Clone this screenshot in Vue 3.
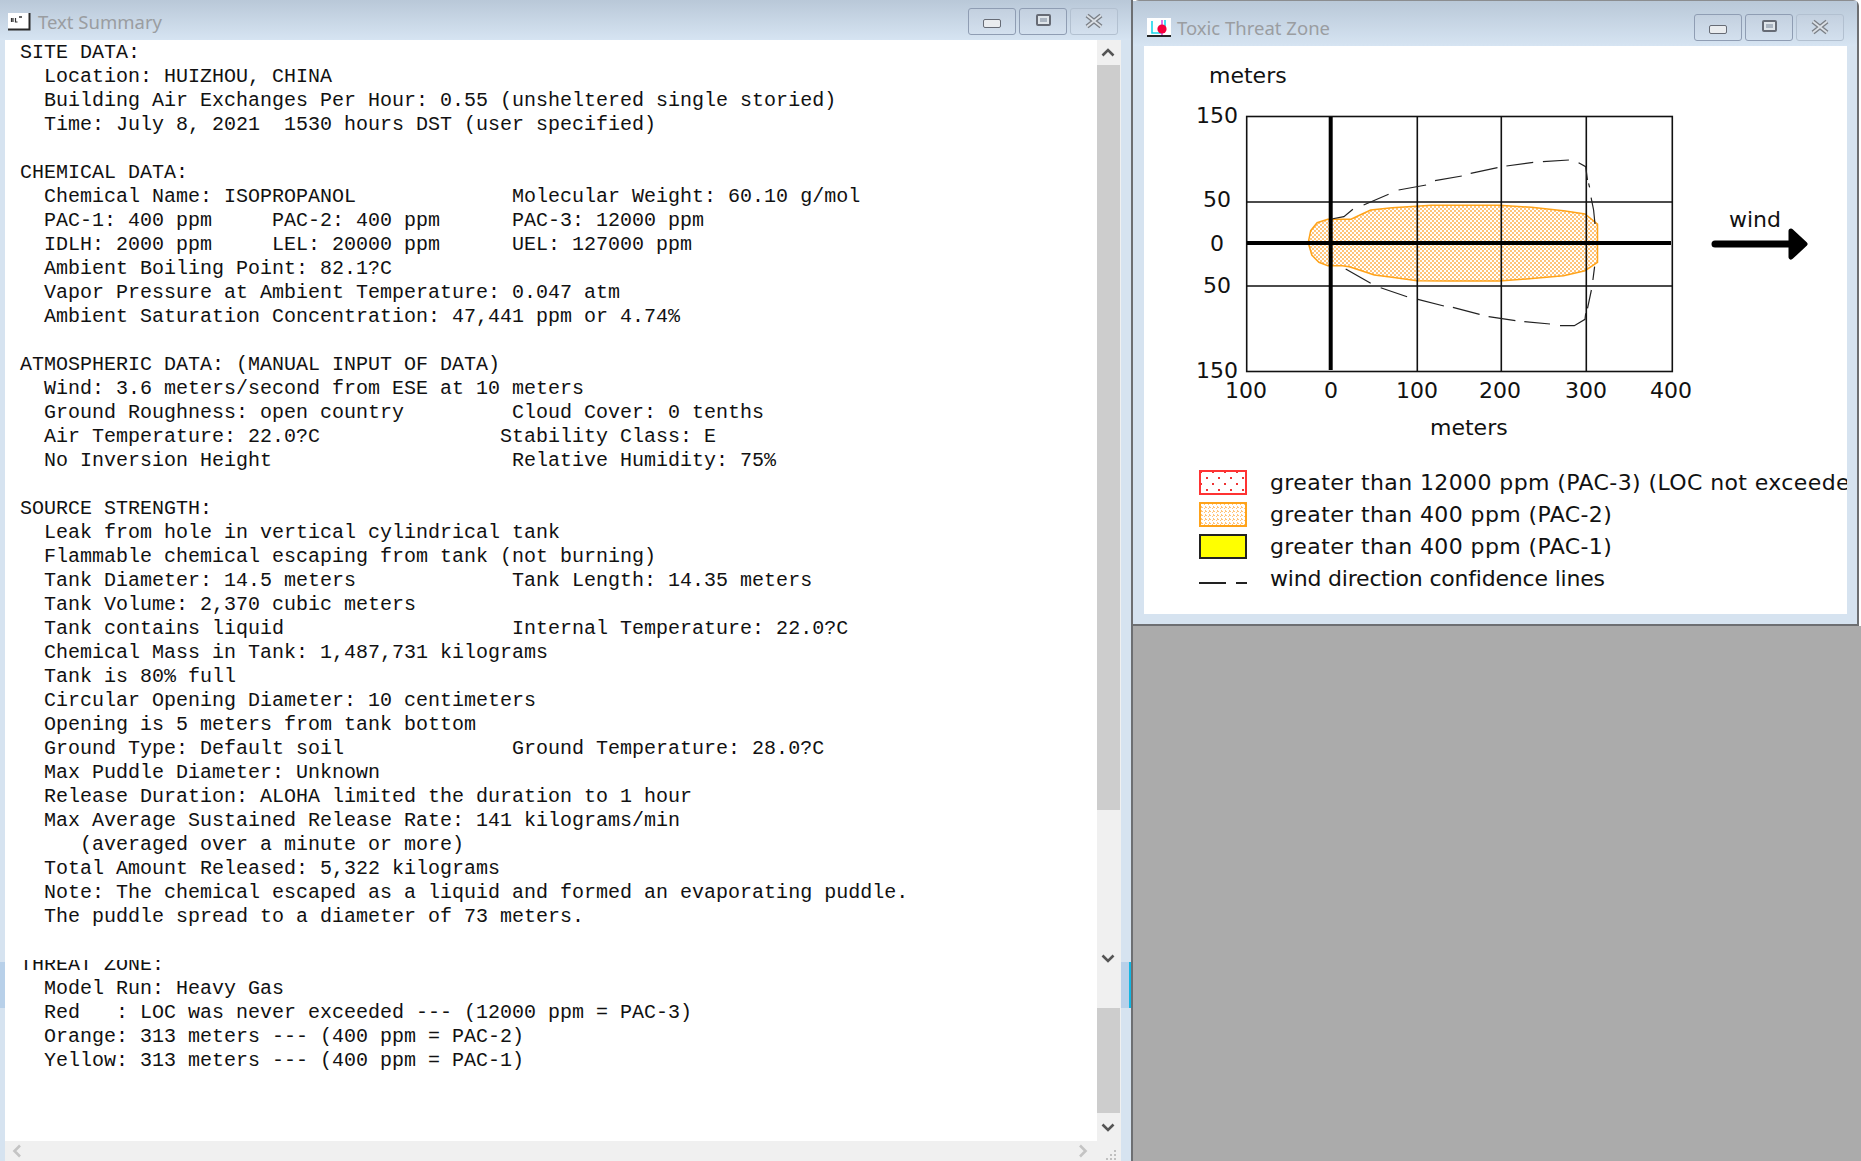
<template>
  <div class="screen">
    <section class="win summary">
      <header class="titlebar">
        <svg class="app-icon" width="24" height="20" viewBox="0 0 24 20">
          <rect x="0" y="1" width="21" height="16" fill="#fff" />
          <path d="M21.5 1v16.5H0" fill="none" stroke="#2a2a2a" stroke-width="2" />
          <path d="M3.5 6v4M5 6v4M7.5 6v4h2" fill="none" stroke="#333" stroke-width="1.2" />
          <path d="M11 5h3" stroke="#333" stroke-width="1.5" />
        </svg>
        <span class="caption">Text Summary</span>
        <div class="controls">
          <button class="ctl"><i class="min"></i></button>
          <button class="ctl"><i class="max"></i></button>
          <button class="ctl close"><svg width="20" height="16" viewBox="0 0 20 16"><path d="M3 2.5l14 11M17 2.5L3 13.5" stroke="#7b8087" stroke-width="4.6" /><path d="M3 2.5l14 11M17 2.5L3 13.5" stroke="#dbe0e6" stroke-width="1.8" /></svg></button>
        </div>
      </header>
      <div class="body">
        <div class="edge"><b class="flash"></b></div>
        <div class="report">
          <pre class="text">{{ report }}</pre>
          <div class="repaint"></div>
        </div>
        <div class="vscroll">
          <div class="arrow up"><svg width="14" height="9" viewBox="0 0 14 9"><path d="M1.5 7.5L7 2l5.5 5.5" fill="none" stroke="#555" stroke-width="2.6" /></svg></div>
          <div class="thumb top-thumb"></div>
          <div class="track one"></div>
          <div class="arrow down stale"><svg width="14" height="9" viewBox="0 0 14 9"><path d="M1.5 1.5L7 7l5.5-5.5" fill="none" stroke="#555" stroke-width="2.6" /></svg></div>
          <div class="track two"></div>
          <div class="thumb low-thumb"></div>
          <div class="arrow down"><svg width="14" height="9" viewBox="0 0 14 9"><path d="M1.5 1.5L7 7l5.5-5.5" fill="none" stroke="#555" stroke-width="2.6" /></svg></div>
        </div>
        <div class="edge right-edge"><b class="flash"></b></div>
      </div>
      <div class="hscroll">
        <svg width="10" height="14" viewBox="0 0 10 14"><path d="M8 1.5L2.5 7 8 12.5" fill="none" stroke="#c4c4c4" stroke-width="2.6" /></svg>
        <svg class="next" width="10" height="14" viewBox="0 0 10 14"><path d="M2 1.5L7.5 7 2 12.5" fill="none" stroke="#c4c4c4" stroke-width="2.6" /></svg>
        <svg class="grip" width="14" height="12" viewBox="0 0 14 12"><path d="M10 1h2v2h-2zM6 5h2v2H6zM10 5h2v2h-2zM2 9h2v2H2zM6 9h2v2H6zM10 9h2v2h-2z" fill="#c0c0c0" /></svg>
      </div>
    </section>

    <div class="desk">
      <div class="threat-wrap">
        <section class="win threat">
          <header class="titlebar">
            <svg class="app-icon" width="24" height="20" viewBox="0 0 24 20">
              <rect x="0" y="1" width="24" height="17" fill="#fff" />
              <path d="M5 4v12h10M18 3v8" fill="none" stroke="#19d7ea" stroke-width="1.6" />
              <path d="M15 3v16" stroke="#d13adf" stroke-width="1.4" />
              <circle cx="15" cy="12" r="4.6" fill="#f5003c" />
              <path d="M0 19h24" stroke="#111" stroke-width="1.8" />
            </svg>
            <span class="caption">Toxic Threat Zone</span>
            <div class="controls">
              <button class="ctl"><i class="min"></i></button>
              <button class="ctl"><i class="max"></i></button>
              <button class="ctl close"><svg width="20" height="16" viewBox="0 0 20 16"><path d="M3 2.5l14 11M17 2.5L3 13.5" stroke="#7b8087" stroke-width="4.6" /><path d="M3 2.5l14 11M17 2.5L3 13.5" stroke="#dbe0e6" stroke-width="1.8" /></svg></button>
            </div>
          </header>
          <div class="canvas">
            <svg class="chart" width="703" height="404" viewBox="1144 46 703 404">
              <defs>
                <pattern id="plumeDots" width="4" height="4" patternUnits="userSpaceOnUse">
                  <rect width="4" height="4" fill="#fff" />
                  <rect width="2" height="2" fill="#ffc47a" />
                  <rect x="2" y="2" width="2" height="2" fill="#ffc47a" />
                </pattern>
              </defs>
              <text x="1209" y="83" class="lbl">meters</text>
              <text x="1196" y="123" class="lbl">150</text>
              <text x="1203" y="207" class="lbl">50</text>
              <text x="1210" y="251" class="lbl">0</text>
              <text x="1203" y="293" class="lbl">50</text>
              <text x="1196" y="378" class="lbl">150</text>
              <text x="1246" y="398" class="lbl mid">100</text>
              <text x="1331" y="398" class="lbl mid">0</text>
              <text x="1417" y="398" class="lbl mid">100</text>
              <text x="1500" y="398" class="lbl mid">200</text>
              <text x="1586" y="398" class="lbl mid">300</text>
              <text x="1671" y="398" class="lbl mid">400</text>
              <text x="1430" y="435" class="lbl">meters</text>
              <text x="1729" y="227" class="lbl">wind</text>

              <path :d="plumePath" fill="url(#plumeDots)" stroke="#ffa31a" stroke-width="1.5" />

              <rect x="1246.7" y="116.5" width="425.6" height="255" fill="none" stroke="#111" stroke-width="1.6" />
              <path d="M1417.3 117v255M1501.3 117v255M1586.3 117v255M1247 202h426M1247 286h426" stroke="#111" stroke-width="1.6" fill="none" />
              <path d="M1330.7 117v253M1247 243h424" stroke="#000" stroke-width="4" fill="none" />
              <path :d="dashPath" fill="none" stroke="#222" stroke-width="1.2" />

              <path d="M1715 244h76" stroke="#000" stroke-width="7" stroke-linecap="round" />
              <path d="M1791 231l14 13-14 13z" fill="#000" stroke="#000" stroke-width="5" stroke-linejoin="round" />
            </svg>

            <ul class="legend">
              <li>
                <span class="swatch red"></span>
                <span class="wide">greater than 12000 ppm (PAC-3) (LOC not exceeded)</span>
              </li>
              <li>
                <span class="swatch orange"></span>
                <span class="wide">greater than 400 ppm (PAC-2)</span>
              </li>
              <li>
                <span class="swatch yellow"></span>
                <span class="wide">greater than 400 ppm (PAC-1)</span>
              </li>
              <li>
                <span class="swatch dashes"><i></i><i></i></span>
                <span class="tight">wind direction confidence lines</span>
              </li>
            </ul>
          </div>
        </section>
      </div>
    </div>
  </div>
</template>

<script setup>
const report = `SITE DATA:
  Location: HUIZHOU, CHINA
  Building Air Exchanges Per Hour: 0.55 (unsheltered single storied)
  Time: July 8, 2021  1530 hours DST (user specified)

CHEMICAL DATA:
  Chemical Name: ISOPROPANOL             Molecular Weight: 60.10 g/mol
  PAC-1: 400 ppm     PAC-2: 400 ppm      PAC-3: 12000 ppm
  IDLH: 2000 ppm     LEL: 20000 ppm      UEL: 127000 ppm
  Ambient Boiling Point: 82.1?C
  Vapor Pressure at Ambient Temperature: 0.047 atm
  Ambient Saturation Concentration: 47,441 ppm or 4.74%

ATMOSPHERIC DATA: (MANUAL INPUT OF DATA)
  Wind: 3.6 meters/second from ESE at 10 meters
  Ground Roughness: open country         Cloud Cover: 0 tenths
  Air Temperature: 22.0?C               Stability Class: E
  No Inversion Height                    Relative Humidity: 75%

SOURCE STRENGTH:
  Leak from hole in vertical cylindrical tank
  Flammable chemical escaping from tank (not burning)
  Tank Diameter: 14.5 meters             Tank Length: 14.35 meters
  Tank Volume: 2,370 cubic meters
  Tank contains liquid                   Internal Temperature: 22.0?C
  Chemical Mass in Tank: 1,487,731 kilograms
  Tank is 80% full
  Circular Opening Diameter: 10 centimeters
  Opening is 5 meters from tank bottom
  Ground Type: Default soil              Ground Temperature: 28.0?C
  Max Puddle Diameter: Unknown
  Release Duration: ALOHA limited the duration to 1 hour
  Max Average Sustained Release Rate: 141 kilograms/min
     (averaged over a minute or more)
  Total Amount Released: 5,322 kilograms
  Note: The chemical escaped as a liquid and formed an evaporating puddle.
  The puddle spread to a diameter of 73 meters.

THREAT ZONE:
  Model Run: Heavy Gas
  Red   : LOC was never exceeded --- (12000 ppm = PAC-3)
  Orange: 313 meters --- (400 ppm = PAC-2)
  Yellow: 313 meters --- (400 ppm = PAC-1)`

// traced from the plot, in zoomed plot units
const toX = (x) => +(1160 + x / 2.8).toFixed(1)
const toY = (y) => +(100 + y / 3).toFixed(1)
const line = (pts) => 'M' + pts.map(([x, y]) => toX(x) + ' ' + toY(y)).join('L')

const plumePath = line([
  [470, 358], [440, 368], [422, 392], [415, 428], [425, 465], [445, 487], [470, 497],
  [510, 497], [530, 500], [560, 511], [600, 525], [650, 532], [720, 542], [800, 543],
  [950, 543], [1050, 535], [1130, 527], [1190, 512], [1225, 487], [1225, 372], [1190, 342],
  [1130, 332], [1040, 322], [950, 316], [760, 316], [650, 323], [590, 330], [560, 345],
  [535, 358]
]) + 'Z'

const dashPath = [
  [[480, 357], [515, 350], [540, 328]],
  [[570, 315], [640, 283]],
  [[668, 270], [745, 255]],
  [[770, 242], [845, 228]],
  [[870, 220], [945, 203]],
  [[970, 198], [1045, 187]],
  [[1072, 185], [1145, 180]],
  [[1172, 188], [1192, 200], [1197, 240]],
  [[1200, 250], [1203, 262]],
  [[1207, 293], [1214, 330], [1218, 372]],
  [[1217, 500], [1212, 540]],
  [[1208, 570], [1197, 625]],
  [[1192, 640], [1190, 658], [1160, 677], [1120, 677]],
  [[1092, 672], [1020, 665]],
  [[995, 662], [920, 650]],
  [[895, 643], [820, 622]],
  [[795, 618], [722, 598]],
  [[692, 590], [618, 563]],
  [[590, 550], [520, 507]]
].map(line).join('')
</script>

<style scoped>
.screen {
  display: flex;
  width: 1861px;
  height: 1161px;
  overflow: hidden;
  font-family: "DejaVu Sans", sans-serif;
}
.win {
  display: flex;
  flex-direction: column;
  background: #d6e3f0;
}
.summary {
  width: 1131px;
  flex: none;
  border-right: 2px solid #6d6f72;
}
.titlebar {
  position: relative;
  display: flex;
  align-items: center;
  flex: none;
  box-sizing: border-box;
  background: linear-gradient(#b9c8d8, #d6e4f2);
}
.summary .titlebar {
  height: 40px;
  padding: 3px 13px 0 8px;
}
.threat .titlebar {
  height: 45px;
  padding: 7px 13px 0 14px;
}
.app-icon {
  flex: none;
  margin-right: 6px;
}
.caption {
  font-family: "Noto Sans", sans-serif;
  font-size: 18.5px;
  color: #9a9da1;
}
.controls {
  display: flex;
  gap: 3px;
  margin-left: auto;
  align-self: flex-start;
  margin-top: 5px;
}
.threat .controls {
  margin-top: 6px;
}
.ctl {
  display: flex;
  align-items: center;
  justify-content: center;
  width: 48px;
  height: 27px;
  padding: 0;
  background: linear-gradient(#c3d0df, #d3e0ee);
  border: 1px solid #8f9db3;
  border-radius: 3px;
}
.ctl.close {
  border-color: #b2c0d0;
}
.ctl.close svg {
  margin-top: -2px;
}
.min {
  display: block;
  width: 16px;
  height: 7px;
  margin-top: 3px;
  background: #e9ecef;
  border: 1px solid #666b75;
  border-radius: 2px;
}
.max {
  display: flex;
  align-items: center;
  justify-content: center;
  box-sizing: border-box;
  width: 15px;
  height: 12px;
  margin-top: -3px;
  background: #dfe5ea;
  border: 2px solid #666b75;
  border-radius: 2px;
}
.max::after {
  content: "";
  width: 7px;
  height: 4px;
  background: #aab4c0;
}
.body {
  display: flex;
  flex: 1;
  min-height: 0;
}
.edge {
  position: relative;
  flex: none;
  width: 5px;
}
.right-edge {
  width: 10px;
}
.flash {
  position: absolute;
  left: 0;
  right: 0;
  top: 922px;
  height: 46px;
  background: #b8d0e9;
}
.right-edge .flash {
  border-right: 2px solid #12b6e2;
}
.report {
  position: relative;
  flex: 1;
  min-width: 0;
  background: #fff;
  padding: 1px 0 0 15px;
  overflow: hidden;
}
.text {
  margin: 0;
  font-family: "Liberation Mono", monospace;
  font-size: 20px;
  line-height: 24px;
  color: #111;
}
.repaint {
  position: absolute;
  left: 0;
  right: 0;
  top: 900px;
  height: 20px;
  background: #fff;
}
.vscroll {
  display: flex;
  flex-direction: column;
  flex: none;
  width: 24px;
  background: #f0f0f0;
}
.arrow {
  display: flex;
  align-items: center;
  justify-content: center;
  flex: none;
  padding-right: 2px;
}
.arrow.up {
  height: 25px;
}
.arrow.stale {
  height: 26px;
}
.arrow.down:last-child {
  height: 28px;
}
.thumb {
  flex: none;
  width: 23px;
  background: #cdcdcd;
}
.top-thumb {
  height: 745px;
}
.low-thumb {
  height: 105px;
}
.track.one {
  height: 135px;
}
.track.two {
  height: 37px;
}
.hscroll {
  display: flex;
  align-items: center;
  flex: none;
  height: 20px;
  margin-left: 5px;
  margin-right: 10px;
  padding-left: 7px;
  background: #f0f0f0;
}
.next {
  margin-left: auto;
  margin-right: 16px;
}
.grip {
  align-self: flex-end;
  margin-right: 3px;
}
.desk {
  flex: 1;
  min-width: 0;
  background: #ababab;
}
.threat-wrap {
  background: #fff;
}
.threat {
  width: 724px;
  height: 623px;
  border-top: 1px solid #8b8d90;
  border-right: 2px solid #6d6f72;
  border-bottom: 2px solid #6d6f72;
  border-top-left-radius: 6px;
  border-top-right-radius: 6px;
}
.canvas {
  flex: 1;
  min-height: 0;
  margin: 0 10px 10px 11px;
  background: #fff;
  overflow: hidden;
}
.chart {
  display: block;
}
.lbl {
  font-family: "DejaVu Sans", sans-serif;
  font-size: 22px;
  fill: #111;
}
.mid {
  text-anchor: middle;
}
.legend {
  display: flex;
  flex-direction: column;
  margin: 16px 0 0;
  padding: 0 0 0 55px;
  list-style: none;
  font-size: 22px;
  color: #111;
  white-space: nowrap;
}
.legend li {
  display: flex;
  align-items: center;
  gap: 23px;
  height: 32px;
}
.legend .wide {
  letter-spacing: 0.4px;
}
.legend .tight {
  letter-spacing: -0.2px;
}
.swatch {
  display: flex;
  flex: none;
  justify-content: space-between;
  align-items: flex-end;
  width: 48px;
  height: 25px;
  box-sizing: border-box;
}
.swatch.red {
  border: 2px solid #f33;
  background:
    radial-gradient(circle, #e33 1px, transparent 1.3px) 0 0 / 12px 12px,
    radial-gradient(circle, #e33 1px, transparent 1.3px) 6px 6px / 12px 12px,
    #fff;
}
.swatch.orange {
  border: 2px solid #ffa31a;
  background:
    linear-gradient(45deg, #ffc47a 25%, transparent 25%, transparent 75%, #ffc47a 75%) 0 0 / 4px 4px,
    #fff;
}
.swatch.yellow {
  border: 2px solid #222;
  background: #ff0;
}
.swatch.dashes {
  height: 12px;
  background: none;
}
.swatch.dashes i {
  display: block;
  height: 2px;
  width: 27px;
  background: #222;
}
.swatch.dashes i + i {
  width: 11px;
}
</style>

<style>
html, body {
  background: #ababab;
}
</style>
